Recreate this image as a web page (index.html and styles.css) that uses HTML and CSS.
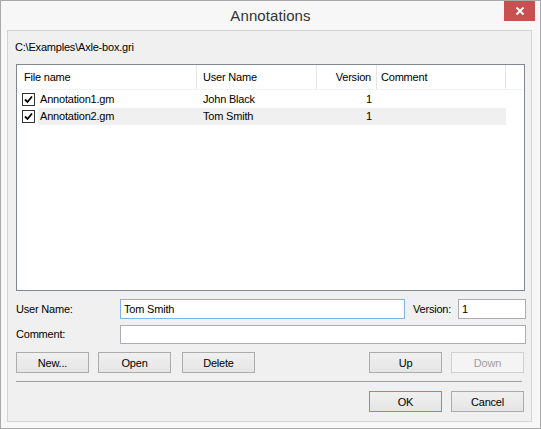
FILE: index.html
```html
<!DOCTYPE html>
<html>
<head>
<meta charset="utf-8">
<link rel="stylesheet" href="styles.css">
</head>
<body>
<div class="window">
  <div class="titlebar">
    <span></span>
    <span class="title">Annotations</span>
    <span class="close-wrap"><span class="close"><svg width="10" height="10" viewBox="0 0 10 10"><path d="M1.5 1.5 L8.5 8.5 M8.5 1.5 L1.5 8.5" stroke="#fff" stroke-width="1.8" fill="none"/></svg></span></span>
  </div>
  <div class="client">
    <div class="path">C:\Examples\Axle-box.gri</div>
    <div class="list">
      <div class="row header">
        <div class="c c-file">File name</div>
        <div class="c c-user">User Name</div>
        <div class="c c-ver">Version</div>
        <div class="c c-com">Comment</div>
        <div class="c c-rest"></div>
      </div>
      <div class="row item">
        <div class="c c-file"><span class="chk"><svg width="9" height="9" viewBox="0 0 9 9"><path d="M1 4.5 L3.5 7 L8 1.5" stroke="#000" stroke-width="1.8" fill="none"/></svg></span><span class="name">Annotation1.gm</span></div>
        <div class="c c-user">John Black</div>
        <div class="c c-ver">1</div>
        <div class="c c-com"></div>
      </div>
      <div class="row item sel">
        <div class="c c-file"><span class="chk"><svg width="9" height="9" viewBox="0 0 9 9"><path d="M1 4.5 L3.5 7 L8 1.5" stroke="#000" stroke-width="1.8" fill="none"/></svg></span><span class="name">Annotation2.gm</span></div>
        <div class="c c-user">Tom Smith</div>
        <div class="c c-ver">1</div>
        <div class="c c-com"></div>
      </div>
    </div>
    <div class="form">
      <label class="lbl">User Name:</label>
      <div class="input focus">Tom Smith</div>
      <label class="lbl ver-lbl">Version:</label>
      <div class="input">1</div>
      <label class="lbl">Comment:</label>
      <div class="input span3"></div>
    </div>
    <div class="buttons">
      <div class="group">
        <button class="btn">New...</button>
        <button class="btn">Open</button>
        <button class="btn">Delete</button>
      </div>
      <div class="group">
        <button class="btn">Up</button>
        <button class="btn" disabled>Down</button>
      </div>
    </div>
    <div class="sep"></div>
    <div class="footer">
      <button class="btn default">OK</button>
      <button class="btn">Cancel</button>
    </div>
  </div>
</div>
</body>
</html>
```
FILE: styles.css
```css
* { box-sizing: border-box; }
html, body { margin: 0; padding: 0; background: #ffffff; }
body { font-family: "Liberation Sans", Arial, sans-serif; font-size: 11px; color: #000; letter-spacing: -0.2px; }

.window {
  width: 541px;
  height: 429px;
  border: 1px solid #a9a9a9;
  background: #f7f7f7;
  display: flex;
  flex-direction: column;
}

.titlebar {
  height: 29px;
  display: grid;
  grid-template-columns: 1fr auto 1fr;
  align-items: start;
}
.title {
  font-size: 15px;
  color: #333;
  padding-top: 6px;
  letter-spacing: 0.1px;
}
.close-wrap { display: flex; justify-content: flex-end; padding-right: 5px; }
.close {
  width: 31px;
  height: 20px;
  background: #c75050;
  display: flex;
  align-items: center;
  justify-content: center;
}

.client {
  flex: 1;
  margin: 0 8px 6px 6px;
  border: 1px solid #d4d4d4;
  background: #f0f0f0;
  padding: 0 6px 0 8px;
  display: flex;
  flex-direction: column;
}

.path {
  margin-top: 9px;
  margin-left: -1px;
  height: 14px;
  line-height: 14px;
}

.list {
  margin-top: 10px;
  height: 227px;
  border: 1px solid #828790;
  background: #fff;
}
.row { display: flex; height: 17px; line-height: 17px; }
.row.header {
  height: 25px;
  line-height: 24px;
  border-bottom: 1px solid #f0f4f9;
}
.row.header .c { border-right: 1px solid #e5e5e5; }
.c { padding: 0 5px; white-space: nowrap; overflow: hidden; }
.c-file { width: 180px; padding-left: 7px; display: flex; align-items: center; }
.c-user { width: 120px; padding-left: 6px; }
.c-ver { width: 60px; text-align: right; padding-right: 5px; }
.c-com { width: 129px; padding-left: 4px; }
.c-rest { flex: 1; border-right: none !important; }
.row.item { margin-top: 1px; }
.row.item + .row.item { margin-top: 0; }
.row.item .c-file { padding-left: 5px; padding-right: 0; }
.row.sel .name, .row.sel .c-user, .row.sel .c-ver, .row.sel .c-com { background: #f0f0f0; }
.row.item .name { padding-left: 2px; flex: 1; }
.chk {
  width: 13px;
  height: 13px;
  border: 1px solid #333;
  background: #fff;
  display: flex;
  align-items: center;
  justify-content: center;
  margin-right: 3px;
  flex: none;
}

.form {
  margin-top: 8px;
  display: grid;
  grid-template-columns: 104px 285px 53px 68px;
  row-gap: 5px;
  align-items: center;
}
.lbl { height: 20px; line-height: 20px; }
.ver-lbl { padding-left: 8px; }
.input {
  height: 20px;
  border: 1px solid #abadb3;
  background: #fff;
  line-height: 18px;
  padding-left: 3px;
}
.input.focus { border-color: #7eb4ea; }
.span3 { grid-column: 2 / 5; height: 19px; }

.buttons {
  margin-top: 8px;
  display: flex;
  justify-content: space-between;
  padding-right: 1px;
}
.group { display: flex; gap: 9px; }
.group:first-child .btn:nth-child(3) { margin-left: 2px; }
.btn {
  width: 73px;
  height: 21px;
  font-family: "Liberation Sans", Arial, sans-serif;
  font-size: 11px;
  letter-spacing: -0.2px;
  color: #000;
  border: 1px solid #acacac;
  background: linear-gradient(#f0f0f0, #e5e5e5);
  padding: 0;
}
.btn:disabled { color: #a0a0a0; border-color: #d0d0d0; background: #f4f4f4; }
.btn.default { border-color: #5b9bd5; }

.sep {
  margin-top: 8px;
  height: 1px;
  background: #a0a0a0;
  margin-right: 3px;
}

.footer {
  margin-top: 9px;
  display: flex;
  justify-content: flex-end;
  gap: 9px;
  padding-right: 1px;
}
```
